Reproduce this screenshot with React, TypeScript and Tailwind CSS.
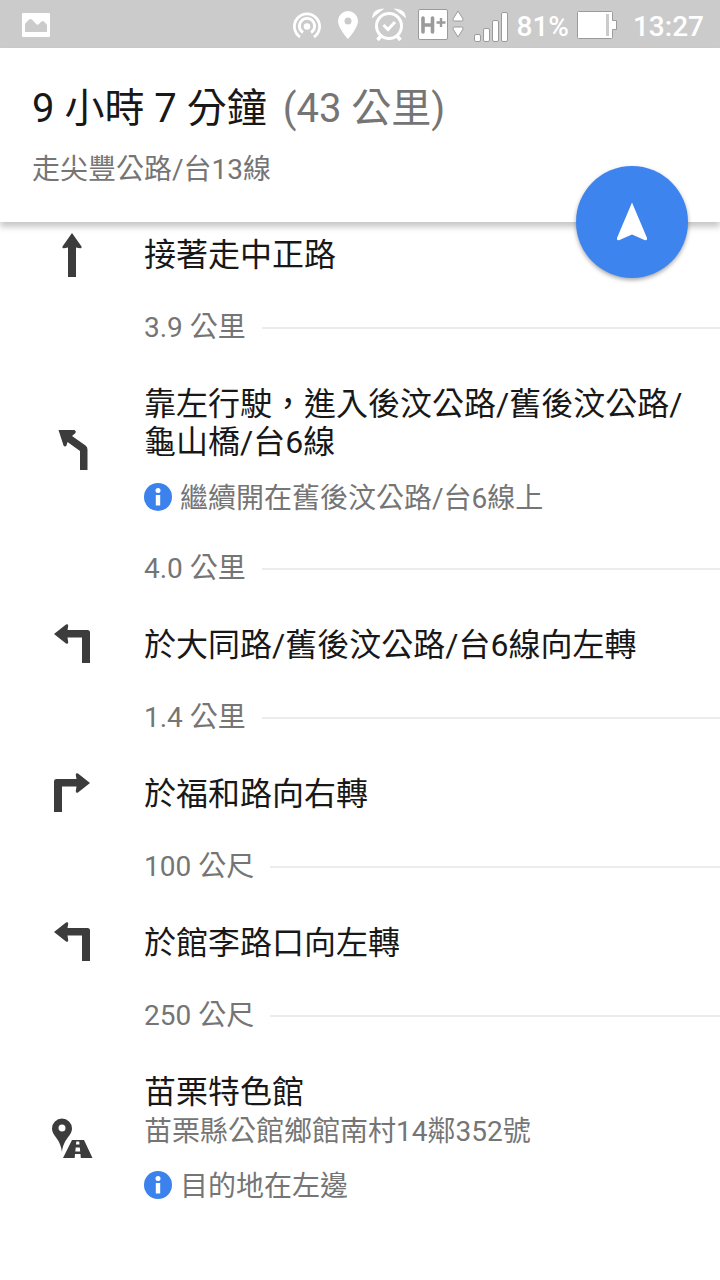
import type { ReactNode } from "react";

type IconName = "straight" | "slight-left" | "left" | "right" | "destination";

interface Step {
  id: number;
  icon: IconName;
  title: string;
  address?: string;
  info?: string;
  distance?: string;
}

const steps: Step[] = [
  { id: 1, icon: "straight", title: "接著走中正路", distance: "3.9 公里" },
  {
    id: 2,
    icon: "slight-left",
    title: "靠左行駛，進入後汶公路/舊後汶公路/龜山橋/台6線",
    info: "繼續開在舊後汶公路/台6線上",
    distance: "4.0 公里",
  },
  {
    id: 3,
    icon: "left",
    title: "於大同路/舊後汶公路/台6線向左轉",
    distance: "1.4 公里",
  },
  { id: 4, icon: "right", title: "於福和路向右轉", distance: "100 公尺" },
  { id: 5, icon: "left", title: "於館李路口向左轉", distance: "250 公尺" },
  {
    id: 6,
    icon: "destination",
    title: "苗栗特色館",
    address: "苗栗縣公館鄉館南村14鄰352號",
    info: "目的地在左邊",
  },
];

const turnLeft = (
  <path d="M6 13 18 3.500Q20.500 2.500 20.200 5L19.500 9H39.500Q42 9 42 11.500V42H34V16.500H19.500L20.200 21Q20.500 23.500 18 22.500Z" />
);

const icons: Record<IconName, ReactNode> = {
  straight: (
    <path d="M24 2 33.500 15.500Q34 17.500 32 17.200L28 16.500V46H20V16.500L16 17.200Q14 17.500 14.500 15.500Z" />
  ),
  "slight-left": (
    <path d="M10.500 4H26.500Q28.500 5 27.500 7L24 10 37.500 19.500Q39.500 21 39.500 23.500V44H32V25L19.500 16 18.500 19.500Q17 21.500 15.500 19.500Z" />
  ),
  left: turnLeft,
  right: <g transform="matrix(-1 0 0 1 48 0)">{turnLeft}</g>,
  destination: (
    <>
      <path
        fillRule="evenodd"
        d="M14 4.500A10 10 0 0 0 4 14.500C4 22 12.500 24.500 14 38C15.500 24.500 24 22 24 14.500A10 10 0 0 0 14 4.500ZM14 10.500A3.500 3.500 0 1 1 14 17.500A3.500 3.500 0 0 1 14 10.500Z"
      />
      <path
        fillRule="evenodd"
        d="M24 26H36L44.500 44H15ZM28.300 27.500 28 30.500H31.500L31.200 27.500ZM27.700 33.500 27.300 37.500H32.200L31.800 33.500ZM27 40 26.700 44H32.800L32.500 40Z"
      />
    </>
  ),
};

function InfoLine({ text }: { text: string }) {
  return (
    <p className="mt-[18px] flex h-9 items-center gap-2 text-[28px] text-[#757575]">
      <svg viewBox="0 0 28 28" className="size-7 shrink-0" aria-hidden="true">
        <circle cx="14" cy="14" r="14" fill="#3b82ec" />
        <circle cx="14" cy="7.500" r="2.500" fill="#fff" />
        <path d="M11.800 12H16.200V22.500H11.800Z" fill="#fff" />
      </svg>
      <span className="pt-1 leading-8">{text}</span>
    </p>
  );
}

function StatusBar() {
  return (
    <div className="flex h-12 items-center bg-[#cbcbcb] pt-0.5 pr-4 pl-[22px] text-white">
      {/* screenshot notification */}
      <svg viewBox="0 0 28 24" className="h-6 w-7" aria-hidden="true">
        <path
          fill="currentColor"
          fillRule="evenodd"
          d="M1 0H27Q28 0 28 1V23Q28 24 27 24H1Q0 24 0 23V1Q0 0 1 0ZM3 19H25V12Q22 8 20.500 8Q19 8.500 17 11Q15.500 12.500 14 11Q10 6 8.500 6Q7 6 3 11Z"
        />
      </svg>

      <div className="ml-auto flex items-center">
        {/* hotspot */}
        <svg
          viewBox="0 0 30 28"
          className="h-7 w-[30px]"
          fill="none"
          stroke="currentColor"
          strokeWidth="2.800"
          aria-hidden="true"
        >
          <path d="M8 26A12.600 12.600 0 1 1 22 26" />
          <path d="M11 21.500A7.600 7.600 0 1 1 19 21.500" />
          <circle cx="15" cy="15.500" r="3.300" fill="currentColor" stroke="none" />
        </svg>

        {/* location */}
        <svg viewBox="0 0 20 28" className="ml-4 h-7 w-5" aria-hidden="true">
          <path
            fill="currentColor"
            fillRule="evenodd"
            d="M10 0A10 10 0 0 0 0 10C0 17 10 28 10 28S20 17 20 10A10 10 0 0 0 10 0ZM10 6.500A3.500 3.500 0 1 1 10 13.500A3.500 3.500 0 0 1 10 6.500Z"
          />
        </svg>

        {/* alarm */}
        <svg
          viewBox="0 0 34 34"
          className="ml-[14px] size-[34px]"
          fill="none"
          stroke="currentColor"
          strokeWidth="3"
          aria-hidden="true"
        >
          <circle cx="17" cy="18" r="12.500" />
          <path d="M11.500 17 16 21.500 23 14" />
          <path d="M9 28 5.500 32M25 28 28.500 32" strokeWidth="3.500" />
          <path
            d="M1 8.500Q2 2 10 1.500ZM33 8.500Q32 2 24 1.500Z"
            fill="currentColor"
            strokeWidth="1.500"
          />
        </svg>

        {/* mobile data */}
        <svg viewBox="0 0 48 32" className="ml-3 h-8 w-12" aria-hidden="true">
          <rect x="0.500" y="0.500" width="29" height="30" rx="1.500" fill="#fff" stroke="#9b9b9b" />
          <path d="M5 9V23M14.500 9V23M5 16H14.500" fill="none" stroke="#9b9b9b" strokeWidth="3.600" strokeLinecap="round" />
          <path d="M23 9V18M18.500 13.500H27.500" stroke="#9b9b9b" strokeWidth="2.400" />
          <path d="M40 2 45 10Q45.500 12 43.500 12H36.500Q34.500 12 35 10ZM40 28 45 20Q45.500 18 43.500 18H36.500Q34.500 18 35 20Z" fill="#fff" stroke="#9b9b9b" />
        </svg>

        {/* signal */}
        <svg viewBox="0 0 34 30" className="mt-1 ml-2 h-[30px] w-[34px]" fill="#fff" stroke="#9b9b9b" aria-hidden="true">
          <rect x="0.500" y="22.500" width="6" height="7" rx="1.500" />
          <rect x="9.500" y="16.500" width="6" height="13" rx="1.500" />
          <rect x="18.500" y="8.500" width="6" height="21" rx="1.500" />
          <rect x="27.500" y="0.500" width="6" height="29" rx="1.500" />
        </svg>

        <span className="ml-[9px] pt-1 text-[28px] leading-8 font-medium">81%</span>

        {/* battery */}
        <svg viewBox="0 0 40 28" className="ml-2 h-7 w-10" aria-hidden="true">
          <path d="M1.500 0.500H34.500Q35.500 0.500 35.500 1.500V9.500H39.500V18.500H35.500V26.500Q35.500 27.500 34.500 27.500H1.500Q0.500 27.500 0.500 26.500V1.500Q0.500 0.500 1.500 0.500Z" fill="#fff" stroke="#9b9b9b" />
          <path d="M29 3H32V25H29Z" fill="#cbcbcb" />
        </svg>

        <time className="ml-4 pt-1 text-[28px] leading-8 font-medium">13:27</time>
      </div>
    </div>
  );
}

export default function RouteDetails() {
  return (
    <div className="min-h-screen bg-white font-['Roboto','Noto_Sans_CJK_TC',sans-serif] text-[#181818]">
      <StatusBar />

      {/* ROUTE SUMMARY */}
      <header className="relative z-10 bg-white px-8 pt-[35px] pb-[33px] shadow-[0_5px_6px_rgba(0,0,0,0.22)]">
        <h1 className="flex gap-4 text-[40px] leading-[52px]">
          <span>9 小時 7 分鐘</span>
          <span className="text-[#757575]">(43 公里)</span>
        </h1>
        <p className="mt-4 text-[28px] leading-[38px] text-[#757575]">
          走尖豐公路/台13線
        </p>
        <button
          type="button"
          aria-label="開始導航"
          className="absolute right-8 -bottom-14 flex size-28 items-center justify-center rounded-full bg-[#3d84ee] shadow-[0_2px_4px_rgba(0,0,0,0.35)]"
        >
          <svg viewBox="0 0 32 40" className="h-10 w-8" fill="#fff" aria-hidden="true">
            <path d="M16 0.500 31 36Q31.500 39 28.500 38L16 32.500 3.500 38Q0.500 39 1 36Z" />
          </svg>
        </button>
      </header>

      {/* STEPS, first one scrolled partly under the summary */}
      <ol className="-mt-6">
        {steps.map((step) => (
          <li key={step.id}>
            <div className="flex items-center pt-[38px] pr-8 pb-[33px]">
              <div className="-my-2 flex w-36 shrink-0 justify-center">
                <svg viewBox="0 0 48 48" className="size-12" fill="#3c3c3c" aria-hidden="true">
                  {icons[step.icon]}
                </svg>
              </div>
              <div className="min-w-0 flex-1">
                <h2 className="text-[32px] leading-[38px]">{step.title}</h2>
                {step.address && (
                  <p className="pt-1 text-[28px] leading-[34px] text-[#757575]">
                    {step.address}
                  </p>
                )}
                {step.info && <InfoLine text={step.info} />}
              </div>
            </div>

            {step.distance && (
              <div className="flex h-10 items-center gap-4 pl-36 text-[28px] text-[#757575]">
                <span className="pt-0.5 leading-9">{step.distance}</span>
                <span className="mt-0.5 h-[2px] flex-1 bg-[#ececec]" />
              </div>
            )}
          </li>
        ))}
      </ol>
    </div>
  );
}
